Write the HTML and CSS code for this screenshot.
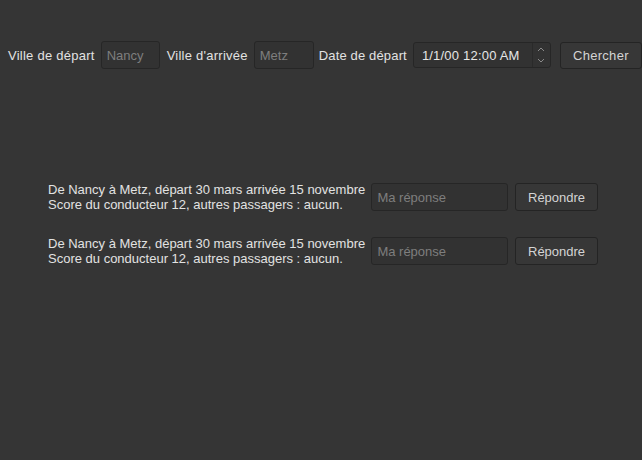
FILE: index.html
```html
<!DOCTYPE html>
<html lang="fr">
<head>
<meta charset="utf-8">
<title>Covoiturage</title>
<link rel="stylesheet" href="styles.css">
</head>
<body>
<div class="search">
  <span class="label">Ville de départ</span>
  <div class="field w58"><span class="ph">Nancy</span></div>
  <span class="label">Ville d'arrivée</span>
  <div class="field w59"><span class="ph">Metz</span></div>
  <span class="label label-date">Date de départ</span>
  <div class="datefield">
    <span class="dateval">1/1/00 12:00 AM</span>
    <div class="spin">
      <svg width="10" height="22" viewBox="0 0 10 22"><path d="M2 7 L5 4 L8 7" fill="none" stroke="#8a8a8a" stroke-width="1"/><path d="M2 15 L5 18 L8 15" fill="none" stroke="#8a8a8a" stroke-width="1"/></svg>
    </div>
  </div>
  <div class="btn btn-search">Chercher</div>
</div>
<div class="list">
  <div class="row">
    <div class="desc">De Nancy à Metz, départ 30 mars arrivée 15 novembre<br>Score du conducteur 12, autres passagers : aucun.</div>
    <div class="field answer"><span class="ph">Ma réponse</span></div>
    <div class="btn btn-answer">Répondre</div>
  </div>
  <div class="row">
    <div class="desc">De Nancy à Metz, départ 30 mars arrivée 15 novembre<br>Score du conducteur 12, autres passagers : aucun.</div>
    <div class="field answer"><span class="ph">Ma réponse</span></div>
    <div class="btn btn-answer">Répondre</div>
  </div>
</div>
</body>
</html>
```
FILE: styles.css
```css
html, body {
  margin: 0;
  padding: 0;
  background: #353535;
  height: 100%;
}
body {
  font-family: "Liberation Sans", Arial, sans-serif;
  font-size: 13px;
  color: #e2e2e2;
  overflow: hidden;
}
.search {
  display: flex;
  align-items: center;
  padding: 41px 0 0 8px;
  height: 28px;
}
.label {
  white-space: nowrap;
  letter-spacing: 0.25px;
}
.label-date {
  letter-spacing: 0.15px;
}
.field {
  box-sizing: border-box;
  height: 28px;
  border: 1px solid #262626;
  border-radius: 3px;
  background: #323232;
  display: flex;
  align-items: center;
  padding-left: 5px;
}
.ph {
  color: #7e7e7e;
}
.w58 { width: 59px; margin: 0 7px 0 6px; }
.w59 { width: 60px; margin: 0 5px 0 6px; }
.datefield {
  box-sizing: border-box;
  width: 138px;
  height: 26px;
  margin-left: 6px;
  border: 1px solid #262626;
  border-radius: 3px;
  background: #323232;
  display: flex;
  align-items: center;
}
.dateval {
  flex: 1;
  padding-left: 8px;
  color: #e6e6e6;
  letter-spacing: 0.2px;
}
.spin {
  width: 17px;
  height: 24px;
  border-left: 1px solid #2a2a2a;
  display: flex;
  align-items: center;
  justify-content: center;
}
.btn {
  box-sizing: border-box;
  height: 28px;
  border: 1px solid #242424;
  border-radius: 3px;
  background: #373737;
  color: #d4d4d4;
  display: flex;
  align-items: center;
  justify-content: center;
}
.btn-search {
  width: 82px;
  height: 27px;
  margin-left: 9px;
  letter-spacing: 0.3px;
}
.list {
  width: 550px;
  margin: 113px 0 0 48px;
  display: flex;
  flex-direction: column;
  gap: 24px;
}
.row {
  display: flex;
  align-items: center;
}
.desc {
  width: 324px;
  line-height: 15px;
  white-space: nowrap;
}
.answer {
  width: 137px;
  margin-right: 7px;
}
.btn-answer {
  width: 83px;
}
```
